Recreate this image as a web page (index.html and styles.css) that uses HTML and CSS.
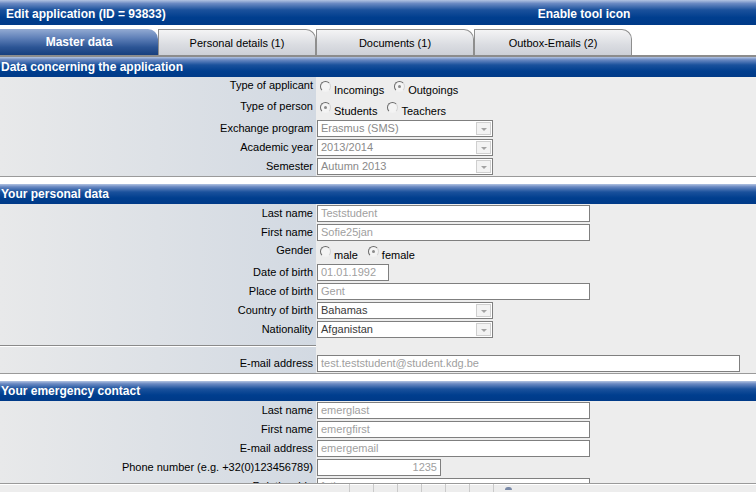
FILE: index.html
```html
<!DOCTYPE html>
<html lang="en">
<head>
    <meta charset="UTF-8">
    <title>Edit application</title>
    <link rel="stylesheet" href="styles.css">
</head>
<body>
    <div class="titlebar">
        <div class="title">Edit application (ID = 93833)</div>
        <div class="tool">Enable tool icon</div>
    </div>

    <div class="tabs">
        <div class="tab active">Master data</div>
        <div class="tab">Personal details (1)</div>
        <div class="tab">Documents (1)</div>
        <div class="tab">Outbox-Emails (2)</div>
    </div>

    <!-- application data -->
    <div class="section">
        <div class="section-head">Data concerning the application</div>
        <div class="section-body">
            <div class="row tall">
                <div class="label">Type of applicant</div>
                <div class="field">
                    <span class="opt"><span class="radio"></span><span class="opt-text">Incomings</span></span>
                    <span class="opt"><span class="radio checked"></span><span class="opt-text">Outgoings</span></span>
                </div>
            </div>
            <div class="row tall">
                <div class="label">Type of person</div>
                <div class="field">
                    <span class="opt"><span class="radio checked"></span><span class="opt-text">Students</span></span>
                    <span class="opt"><span class="radio"></span><span class="opt-text">Teachers</span></span>
                </div>
            </div>
            <div class="row">
                <div class="label">Exchange program</div>
                <div class="field"><div class="select"><span>Erasmus (SMS)</span><span class="arrow"></span></div></div>
            </div>
            <div class="row">
                <div class="label">Academic year</div>
                <div class="field"><div class="select"><span>2013/2014</span><span class="arrow"></span></div></div>
            </div>
            <div class="row">
                <div class="label">Semester</div>
                <div class="field"><div class="select"><span>Autumn 2013</span><span class="arrow"></span></div></div>
            </div>
        </div>
    </div>

    <!-- personal data -->
    <div class="section">
        <div class="section-head">Your personal data</div>
        <div class="section-body">
            <div class="row">
                <div class="label">Last name</div>
                <div class="field"><div class="input">Teststudent</div></div>
            </div>
            <div class="row">
                <div class="label">First name</div>
                <div class="field"><div class="input">Sofie25jan</div></div>
            </div>
            <div class="row tall">
                <div class="label">Gender</div>
                <div class="field">
                    <span class="opt"><span class="radio"></span><span class="opt-text">male</span></span>
                    <span class="opt"><span class="radio checked"></span><span class="opt-text">female</span></span>
                </div>
            </div>
            <div class="row">
                <div class="label">Date of birth</div>
                <div class="field"><div class="input date">01.01.1992</div></div>
            </div>
            <div class="row">
                <div class="label">Place of birth</div>
                <div class="field"><div class="input">Gent</div></div>
            </div>
            <div class="row">
                <div class="label">Country of birth</div>
                <div class="field"><div class="select dark"><span>Bahamas</span><span class="arrow"></span></div></div>
            </div>
            <div class="row">
                <div class="label">Nationality</div>
                <div class="field"><div class="select dark"><span>Afganistan</span><span class="arrow"></span></div></div>
            </div>
            <div class="row spacer">
                <div class="label"><hr class="divider"></div>
                <div class="field"></div>
            </div>
            <div class="row">
                <div class="label">E-mail address</div>
                <div class="field"><div class="input wide">test.teststudent@student.kdg.be</div></div>
            </div>
        </div>
    </div>

    <!-- emergency contact -->
    <div class="section">
        <div class="section-head">Your emergency contact</div>
        <div class="section-body">
            <div class="row">
                <div class="label">Last name</div>
                <div class="field"><div class="input">emerglast</div></div>
            </div>
            <div class="row">
                <div class="label">First name</div>
                <div class="field"><div class="input">emergfirst</div></div>
            </div>
            <div class="row">
                <div class="label">E-mail address</div>
                <div class="field"><div class="input">emergemail</div></div>
            </div>
            <div class="row">
                <div class="label">Phone number (e.g. +32(0)123456789)</div>
                <div class="field"><div class="input phone">1235</div></div>
            </div>
            <div class="row">
                <div class="label">Relationship</div>
                <div class="field"><div class="input">father</div></div>
            </div>
        </div>
    </div>

    <div class="statusbar">
        <span class="cell"></span>
        <span class="cell"></span>
        <span class="cell"></span>
        <span class="cell"></span>
        <span class="cell"></span>
        <span class="cell"></span>
        <span class="cell last"><span class="mark"></span></span>
    </div>
</body>
</html>
```

FILE: styles.css
```css
* {
    margin: 0;
    padding: 0;
    box-sizing: border-box;
}

body {
    font-family: 'Liberation Sans', Arial, sans-serif;
    font-size: 11px;
    color: #000;
    background: #fff;
    overflow: hidden;
}

/* top title bar */
.titlebar {
    display: grid;
    grid-template-columns: 1fr 344px;
    height: 25px;
    background: linear-gradient(to bottom, #b3c4e2 0%, #6a89c2 14%, #1a519c 40%, #003e8e 70%, #003a88 100%);
    color: #fff;
    font-size: 12px;
    font-weight: bold;
    line-height: 20px;
    padding-top: 4px;
}

.title {
    padding-left: 6px;
}

.tool {
    text-align: center;
}

/* tabs */
.tabs {
    display: flex;
    margin-top: 4px;
    height: 28px;
    border-bottom: 2px solid #8c8c8c;
}

.tab {
    width: 158px;
    height: 26px;
    line-height: 27px;
    text-align: center;
    background: linear-gradient(to bottom, #f4f4f5, #dadce1 60%, #cdd0d7);
    border: 1px solid #8e8e8e;
    border-bottom: none;
    border-left: none;
    border-top-right-radius: 10px;
}

.tab + .tab {
    border-left: 1px solid #8e8e8e;
}

.tab.active {
    width: 158px;
    color: #fff;
    font-size: 12px;
    font-weight: bold;
    border: none;
    background: linear-gradient(to bottom, #93abd3 0%, #5f80b8 35%, #2c5595 70%, #173f7e 100%);
}

/* sections */
.section {
    margin-bottom: 7px;
}

.section-head {
    height: 20px;
    line-height: 21px;
    padding-left: 1px;
    color: #fff;
    font-size: 12px;
    font-weight: bold;
    background: linear-gradient(to bottom, #b3c4e2 0%, #6a89c2 14%, #1a519c 40%, #003e8e 70%, #003a88 100%);
}

.section-body {
    border-bottom: 1px solid #9a9a9a;
    background: linear-gradient(to right, #e8e9ea 0, #d2d9e2 316px, #ededed 316px);
}

.row {
    display: grid;
    grid-template-columns: 316px 1fr;
    height: 19px;
}

.row.tall {
    height: 21px;
}

.row.spacer {
    height: 15px;
}

.label {
    text-align: right;
    padding-right: 3px;
    line-height: 19px;
    white-space: nowrap;
}

.row.tall .label {
    line-height: 17px;
}

.divider {
    border: none;
    border-top: 1px solid #8a8a8a;
    border-bottom: 1px solid #fff;
    margin: 6px -3px 0 0;
}

.field {
    display: flex;
    align-items: flex-start;
    padding-left: 1px;
}

/* radio options */
.opt {
    display: flex;
    align-items: flex-start;
    margin-right: 10px;
}

.opt:first-child {
    margin-left: 3px;
}

.radio {
    width: 11px;
    height: 11px;
    margin-top: 4px;
    margin-right: 3px;
    border-radius: 50%;
    border: 1px solid;
    border-color: #6a6a6a #d4d4d4 #f2f2f2 #6a6a6a;
    background: #f4f4f4;
    position: relative;
}

.radio.checked::after {
    content: '';
    position: absolute;
    left: 3px;
    top: 3px;
    width: 3px;
    height: 3px;
    border-radius: 50%;
    background: #8a8a8a;
}

.opt-text {
    padding-top: 7px;
    line-height: 12px;
}

/* inputs */
.input,
.select {
    height: 17px;
    margin-top: 1px;
    border: 1px solid #7f7f7f;
    background: #fff;
    color: #a0a0a0;
    line-height: 15px;
    padding: 0 3px;
    white-space: nowrap;
    overflow: hidden;
}

.input {
    width: 273px;
}

.input.date {
    width: 72px;
}

.input.wide {
    width: 423px;
}

.input.phone {
    width: 124px;
    text-align: right;
}

.select {
    width: 176px;
    display: flex;
    justify-content: space-between;
    padding-right: 1px;
    color: #8a8a8a;
}

.select.dark {
    color: #3a3a3a;
}

.arrow {
    width: 15px;
    height: 13px;
    margin-top: 1px;
    border: 1px solid #cfcfcf;
    background: #f3f3f3;
    display: flex;
    justify-content: center;
    align-items: flex-end;
    padding-bottom: 3px;
}

.arrow::after {
    content: '';
    border-top: 3px solid #a3a3a3;
    border-left: 3px solid transparent;
    border-right: 3px solid transparent;
}

/* floating status bar at the bottom */
.statusbar {
    position: fixed;
    left: 0;
    right: 0;
    bottom: 0;
    height: 9px;
    border-top: 1px solid #9a9a9a;
    box-shadow: inset 0 1px 0 #fff;
    background: #ededed;
    display: flex;
    padding-left: 349px;
}

.cell {
    width: 24px;
    border-left: 1px solid #cacaca;
}

.cell.last {
    width: 40px;
    position: relative;
}

.mark {
    position: absolute;
    left: 11px;
    top: 3px;
    width: 7px;
    height: 3px;
    border-radius: 3px 3px 0 0;
    background: #7a8aa8;
}
```
